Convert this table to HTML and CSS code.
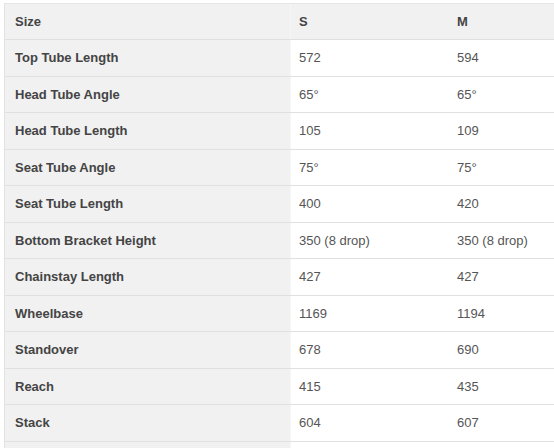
FILE: index.html
```html
<!DOCTYPE html>
<html>
<head>
<meta charset="utf-8">
<link rel="stylesheet" href="styles.css">
</head>
<body>
<div class="wrap">
<table class="geo">
<thead>
<tr><th class="lbl">Size</th><th>S</th><th>M</th></tr>
</thead>
<tbody>
<tr><td class="lbl">Top Tube Length</td><td>572</td><td>594</td></tr>
<tr><td class="lbl">Head Tube Angle</td><td>65°</td><td>65°</td></tr>
<tr><td class="lbl">Head Tube Length</td><td>105</td><td>109</td></tr>
<tr><td class="lbl">Seat Tube Angle</td><td>75°</td><td>75°</td></tr>
<tr><td class="lbl">Seat Tube Length</td><td>400</td><td>420</td></tr>
<tr><td class="lbl">Bottom Bracket Height</td><td>350 (8 drop)</td><td>350 (8 drop)</td></tr>
<tr><td class="lbl">Chainstay Length</td><td>427</td><td>427</td></tr>
<tr><td class="lbl">Wheelbase</td><td>1169</td><td>1194</td></tr>
<tr><td class="lbl">Standover</td><td>678</td><td>690</td></tr>
<tr><td class="lbl">Reach</td><td>415</td><td>435</td></tr>
<tr><td class="lbl">Stack</td><td>604</td><td>607</td></tr>
<tr class="tail"><td class="lbl"></td><td></td><td></td></tr>
</tbody>
</table>
</div>
</body>
</html>
```

FILE: styles.css
```css
html, body {
  margin: 0;
  padding: 0;
  background: #ffffff;
}
.wrap {
  padding: 3px 0 0 4px;
}
.geo {
  width: 551px;
  border-collapse: collapse;
  table-layout: fixed;
  font-family: "Liberation Sans", Arial, sans-serif;
  font-size: 13px;
  color: #555555;
  border-left: 1px solid #e2e2e2;
  border-top: 1px solid #e6e6e6;
}
.geo th, .geo td {
  height: 35.5px;
  padding: 0 0 0 9px;
  text-align: left;
  vertical-align: middle;
  border-bottom: 1px solid #e0e0e0;
  white-space: nowrap;
  overflow: hidden;
}
.geo thead th {
  background: #f1f1f1;
  font-weight: bold;
  color: #444444;
  height: 35px;
}
.geo .lbl {
  width: 276px;
  padding-left: 10px;
  background: #f1f1f1;
  font-weight: bold;
  color: #444444;
  box-shadow: inset -1px 0 0 #f6f6f6;
}
.geo th:nth-child(2), .geo td:nth-child(2) {
  width: 149px;
  padding-left: 8px;
}
.geo th:nth-child(3), .geo td:nth-child(3) {
  padding-left: 9px;
}
```
